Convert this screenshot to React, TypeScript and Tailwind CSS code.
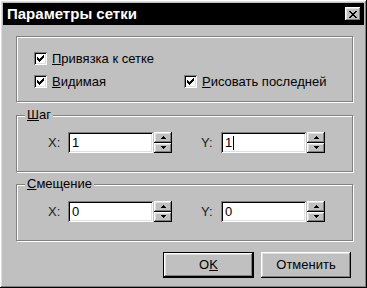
import React from "react";

const raised =
  "shadow-[inset_-1px_-1px_0_#000,inset_1px_1px_0_#fff,inset_-2px_-2px_0_#808080,inset_2px_2px_0_#dfdfdf]";
const sunken =
  "shadow-[inset_1px_1px_0_#808080,inset_-1px_-1px_0_#fff,inset_2px_2px_0_#000,inset_-2px_-2px_0_#dfdfdf]";
const etched =
  "border border-[#808080] shadow-[inset_1px_1px_0_#fff,1px_1px_0_#fff]";

const Check: React.FC<{ label: React.ReactNode; className?: string }> = ({ label, className }) => (
  <div className={`flex items-center ${className ?? ""}`}>
    <div className={`w-[13px] h-[13px] bg-white flex items-center justify-center ${sunken}`}>
      <svg width="7" height="7" viewBox="0 0 7 7" className="block">
        <path d="M0 2h1v1h1v1h1V3h1V2h1V1h1V0h1v3H6v1H5v1H4v1H3v1H2V6H1V5H0z" fill="#000" />
      </svg>
    </div>
    <span className="ml-[5px]">{label}</span>
  </div>
);

const Spinner: React.FC = () => (
  <div className="flex flex-col w-[18px] h-[21px] ml-px">
    <div className={`flex-1 flex items-center justify-center bg-[#c0c0c0] ${raised}`}>
      <svg width="5" height="3" viewBox="0 0 5 3" className="block">
        <path d="M2 0h1v1h1v1h1v1H0V2h1V1h1z" fill="#000" />
      </svg>
    </div>
    <div className={`flex-1 flex items-center justify-center bg-[#c0c0c0] ${raised}`}>
      <svg width="5" height="3" viewBox="0 0 5 3" className="block">
        <path d="M0 0h5v1H4v1H3v1H2V2H1V1H0z" fill="#000" />
      </svg>
    </div>
  </div>
);

const Field: React.FC<{ label: string; value: string; caret?: boolean; className?: string }> = ({
  label,
  value,
  caret,
  className,
}) => (
  <div className={`flex items-center ${className ?? ""}`}>
    <span className="w-[20px] text-[#222]">{label}</span>
    <div className={`w-[85px] h-[21px] bg-white flex items-center pl-[4px] ${sunken}`}>
      <span>{value}</span>
      {caret && <span className="w-px h-[14px] bg-black ml-px" />}
    </div>
    <Spinner />
  </div>
);

const Group: React.FC<{ legend?: React.ReactNode; className?: string; children: React.ReactNode }> = ({
  legend,
  className,
  children,
}) => (
  <fieldset className={`${etched} ${className ?? ""}`}>
    {legend && (
      <legend className="ml-[8px] px-[2px] h-[14px] leading-[14px] bg-[#c0c0c0] relative">{legend}</legend>
    )}
    {children}
  </fieldset>
);

export default function App() {
  return (
    <div
      className={`w-[367px] h-[288px] bg-[#c0c0c0] p-[3px] flex flex-col text-[13px] text-black ${raised}`}
      style={{ fontFamily: '"Liberation Sans", Arial, sans-serif' }}
    >
      <div className="h-[22px] bg-black flex items-center justify-between pl-[4px] pr-[3px]">
        <span className="text-white font-bold text-[15px]">Параметры сетки</span>
        <div className={`w-[16px] h-[14px] bg-[#c0c0c0] flex items-center justify-center ${raised}`}>
          <svg width="8" height="7" viewBox="0 0 8 7" className="block">
            <path d="M0 0h2v1h1v1h2V1h1V0h2v1H7v1H6v1H5v1h1v1h1v1h1v1H6V6H5V5H3v1H2v1H0V6h1V5h1V4h1V3H2V2H1V1H0z" fill="#000" />
          </svg>
        </div>
      </div>

      <div className="flex flex-col pl-[13px] pr-[11px]">
        <Group className="mt-[11px] h-[66px] pt-[12px] pl-[17px]">
          <Check label={<><u>П</u>ривязка к сетке</>} />
          <div className="flex mt-[3px]">
            <Check className="w-[150px]" label={<><u>В</u>идимая</>} />
            <Check label={<><u>Р</u>исовать последней</>} />
          </div>
        </Group>

        <Group className="mt-[6px] pt-[10px] pb-[18px]" legend={<><u>Ш</u>аг</>}>
          <div className="flex pl-[31px]">
            <Field label="X:" value="1" />
            <Field className="ml-[29px]" label="Y:" value="1" caret />
          </div>
        </Group>

        <Group className="mt-[5px] pt-[10px] pb-[18px]" legend={<><u>С</u>мещение</>}>
          <div className="flex pl-[31px]">
            <Field label="X:" value="0" />
            <Field className="ml-[29px]" label="Y:" value="0" />
          </div>
        </Group>

        <div className="flex justify-end gap-[7px] mt-[11px] pr-[2px]">
          <button className={`w-[91px] h-[26px] bg-[#c0c0c0] border border-black ${raised}`}>
            O<u>K</u>
          </button>
          <button className={`w-[90px] h-[26px] bg-[#c0c0c0] ${raised}`}>Отменить</button>
        </div>
      </div>
    </div>
  );
}
